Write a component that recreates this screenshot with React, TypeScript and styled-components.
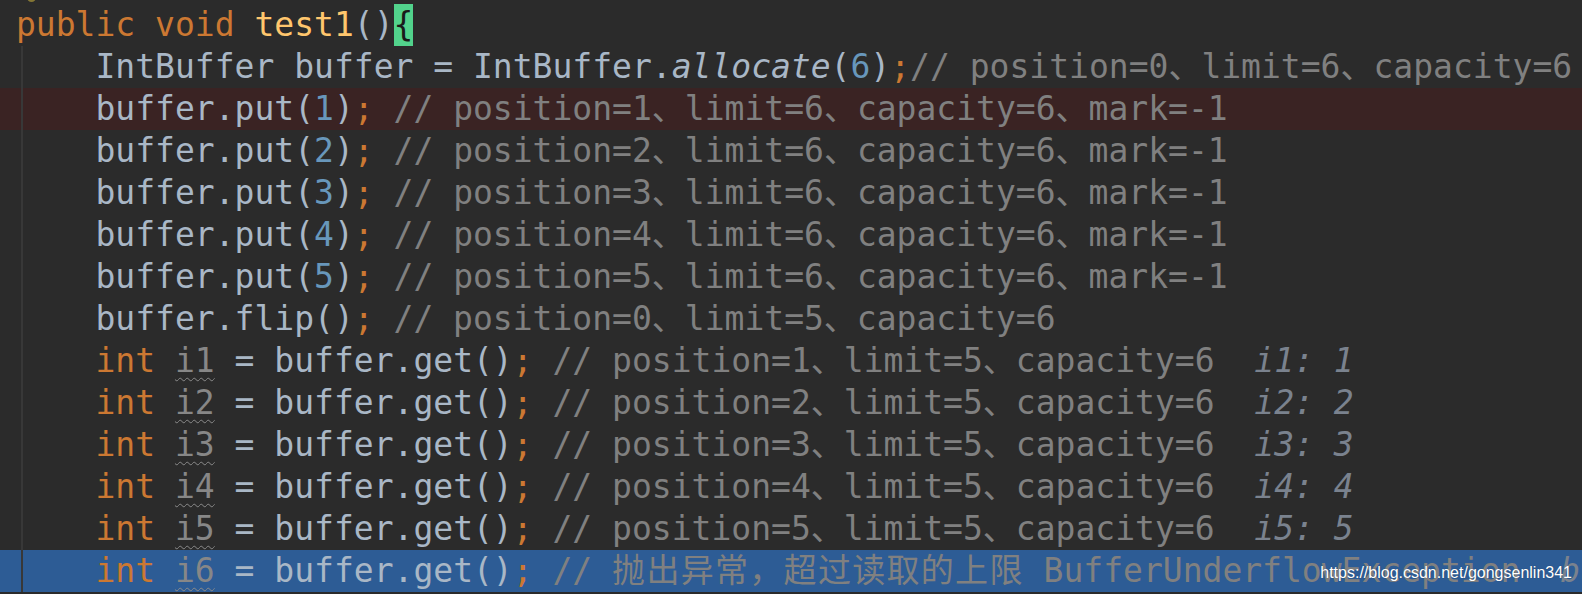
import React from "react";
import styled, { createGlobalStyle, css } from "styled-components";

const Global = createGlobalStyle`
  html, body { margin: 0; padding: 0; background: #2b2b2b; }
  #root { width: 1582px; height: 594px; }
`;

const Editor = styled.div`
  position: relative;
  width: 1582px;
  height: 594px;
  overflow: hidden;
  background: #2b2b2b;
  font-family: "DejaVu Sans Mono", "Noto Sans CJK SC", monospace;
  font-size: 33px;
  color: #a9b7c6;
`;

const TopStrip = styled.div`
  height: 4px;
  overflow: hidden;
  padding-left: 27px;
`;

const Bulb = styled.div`
  width: 9px;
  height: 9px;
  margin-top: -7px;
  border-radius: 50%;
  background: #847634;
`;

const Body = styled.div`
  position: relative;
  &::before {
    content: "";
    position: absolute;
    left: 21px;
    top: 42px;
    bottom: 0;
    width: 2px;
    background: #383838;
    z-index: 1;
  }
`;

type Variant = "plain" | "breakpoint" | "selected";

const Line = styled.div<{ $variant: Variant }>`
  height: 42px;
  line-height: 42px;
  padding-left: 16px;
  white-space: pre;
  ${(p) =>
    p.$variant === "breakpoint" &&
    css`
      background: #3a2323;
    `}
  ${(p) =>
    p.$variant === "selected" &&
    css`
      background: #2d5c95;
    `}
`;

type Kind = "id" | "kw" | "fn" | "num" | "com" | "static" | "inline";

const colors: Record<Kind, string> = {
  id: "#a9b7c6",
  kw: "#cc7832",
  fn: "#ffc66d",
  num: "#6897bb",
  com: "#808080",
  static: "#a9b7c6",
  inline: "#7a828e",
};

const Tok = styled.span<{ $kind: Kind }>`
  color: ${(p) => colors[p.$kind]};
  font-style: ${(p) => (p.$kind === "static" || p.$kind === "inline" ? "italic" : "normal")};
`;

const Cjk = styled.span`
  letter-spacing: 1.3px;
`;

const Unused = styled.span`
  color: #878787;
  text-decoration: underline wavy #8a8a8a;
  text-decoration-thickness: 1px;
  text-underline-offset: 5px;
`;

const Brace = styled.span`
  display: inline-block;
  vertical-align: top;
  height: 42px;
  line-height: 42px;
  background: #52d38c;
  color: #1a1a1a;
`;

const Watermark = styled.div`
  position: absolute;
  right: 10px;
  bottom: 12px;
  z-index: 2;
  font-family: "Liberation Sans", Arial, sans-serif;
  font-size: 16px;
  line-height: 18px;
  color: #ffffff;
  text-shadow: 0 0 1px rgba(0, 0, 0, 0.35);
`;

const IND = "    ";

const putLine = (n: number) => (
  <Line $variant={n === 1 ? "breakpoint" : "plain"} key={`put${n}`}>
    {IND}
    <Tok $kind="id">buffer.put(</Tok>
    <Tok $kind="num">{n}</Tok>
    <Tok $kind="id">)</Tok>
    <Tok $kind="kw">;</Tok>{" "}
    <Tok $kind="com">{`// position=${n}、limit=6、capacity=6、mark=-1`}</Tok>
  </Line>
);

const getLine = (n: number) => (
  <Line $variant="plain" key={`get${n}`}>
    {IND}
    <Tok $kind="kw">int</Tok>{" "}
    <Unused>{`i${n}`}</Unused>
    <Tok $kind="id"> = buffer.get()</Tok>
    <Tok $kind="kw">;</Tok>{" "}
    <Tok $kind="com">{`// position=${n}、limit=5、capacity=6`}</Tok>
    {"  "}
    <Tok $kind="inline">{`i${n}: ${n}`}</Tok>
  </Line>
);

export default function App() {
  return (
    <>
      <Global />
      <Editor>
        <TopStrip>
          <Bulb />
        </TopStrip>
        <Body>
          <Line $variant="plain">
            <Tok $kind="kw">public</Tok> <Tok $kind="kw">void</Tok>{" "}
            <Tok $kind="fn">test1</Tok>
            <Tok $kind="id">()</Tok>
            <Brace>{"{"}</Brace>
          </Line>
          <Line $variant="plain">
            {IND}
            <Tok $kind="id">IntBuffer buffer = IntBuffer.</Tok>
            <Tok $kind="static">allocate</Tok>
            <Tok $kind="id">(</Tok>
            <Tok $kind="num">6</Tok>
            <Tok $kind="id">)</Tok>
            <Tok $kind="kw">;</Tok>
            <Tok $kind="com">// position=0、limit=6、capacity=6</Tok>
          </Line>
          {[1, 2, 3, 4, 5].map(putLine)}
          <Line $variant="plain">
            {IND}
            <Tok $kind="id">buffer.flip()</Tok>
            <Tok $kind="kw">;</Tok>{" "}
            <Tok $kind="com">// position=0、limit=5、capacity=6</Tok>
          </Line>
          {[1, 2, 3, 4, 5].map(getLine)}
          <Line $variant="selected">
            {IND}
            <Tok $kind="kw">int</Tok> <Unused>i6</Unused>
            <Tok $kind="id"> = buffer.get()</Tok>
            <Tok $kind="kw">;</Tok>{" "}
            <Tok $kind="com">
              {"// "}
              <Cjk>抛出异常，超过读取的上限</Cjk>
              {" BufferUnderflowException"}
            </Tok>
            {"  "}
            <Tok $kind="inline">buffer: "java.nio.HeapIntBuffer[pos=5 lim=5 cap=6]"</Tok>
          </Line>
        </Body>
        <Watermark>https://blog.csdn.net/gongsenlin341</Watermark>
      </Editor>
    </>
  );
}
